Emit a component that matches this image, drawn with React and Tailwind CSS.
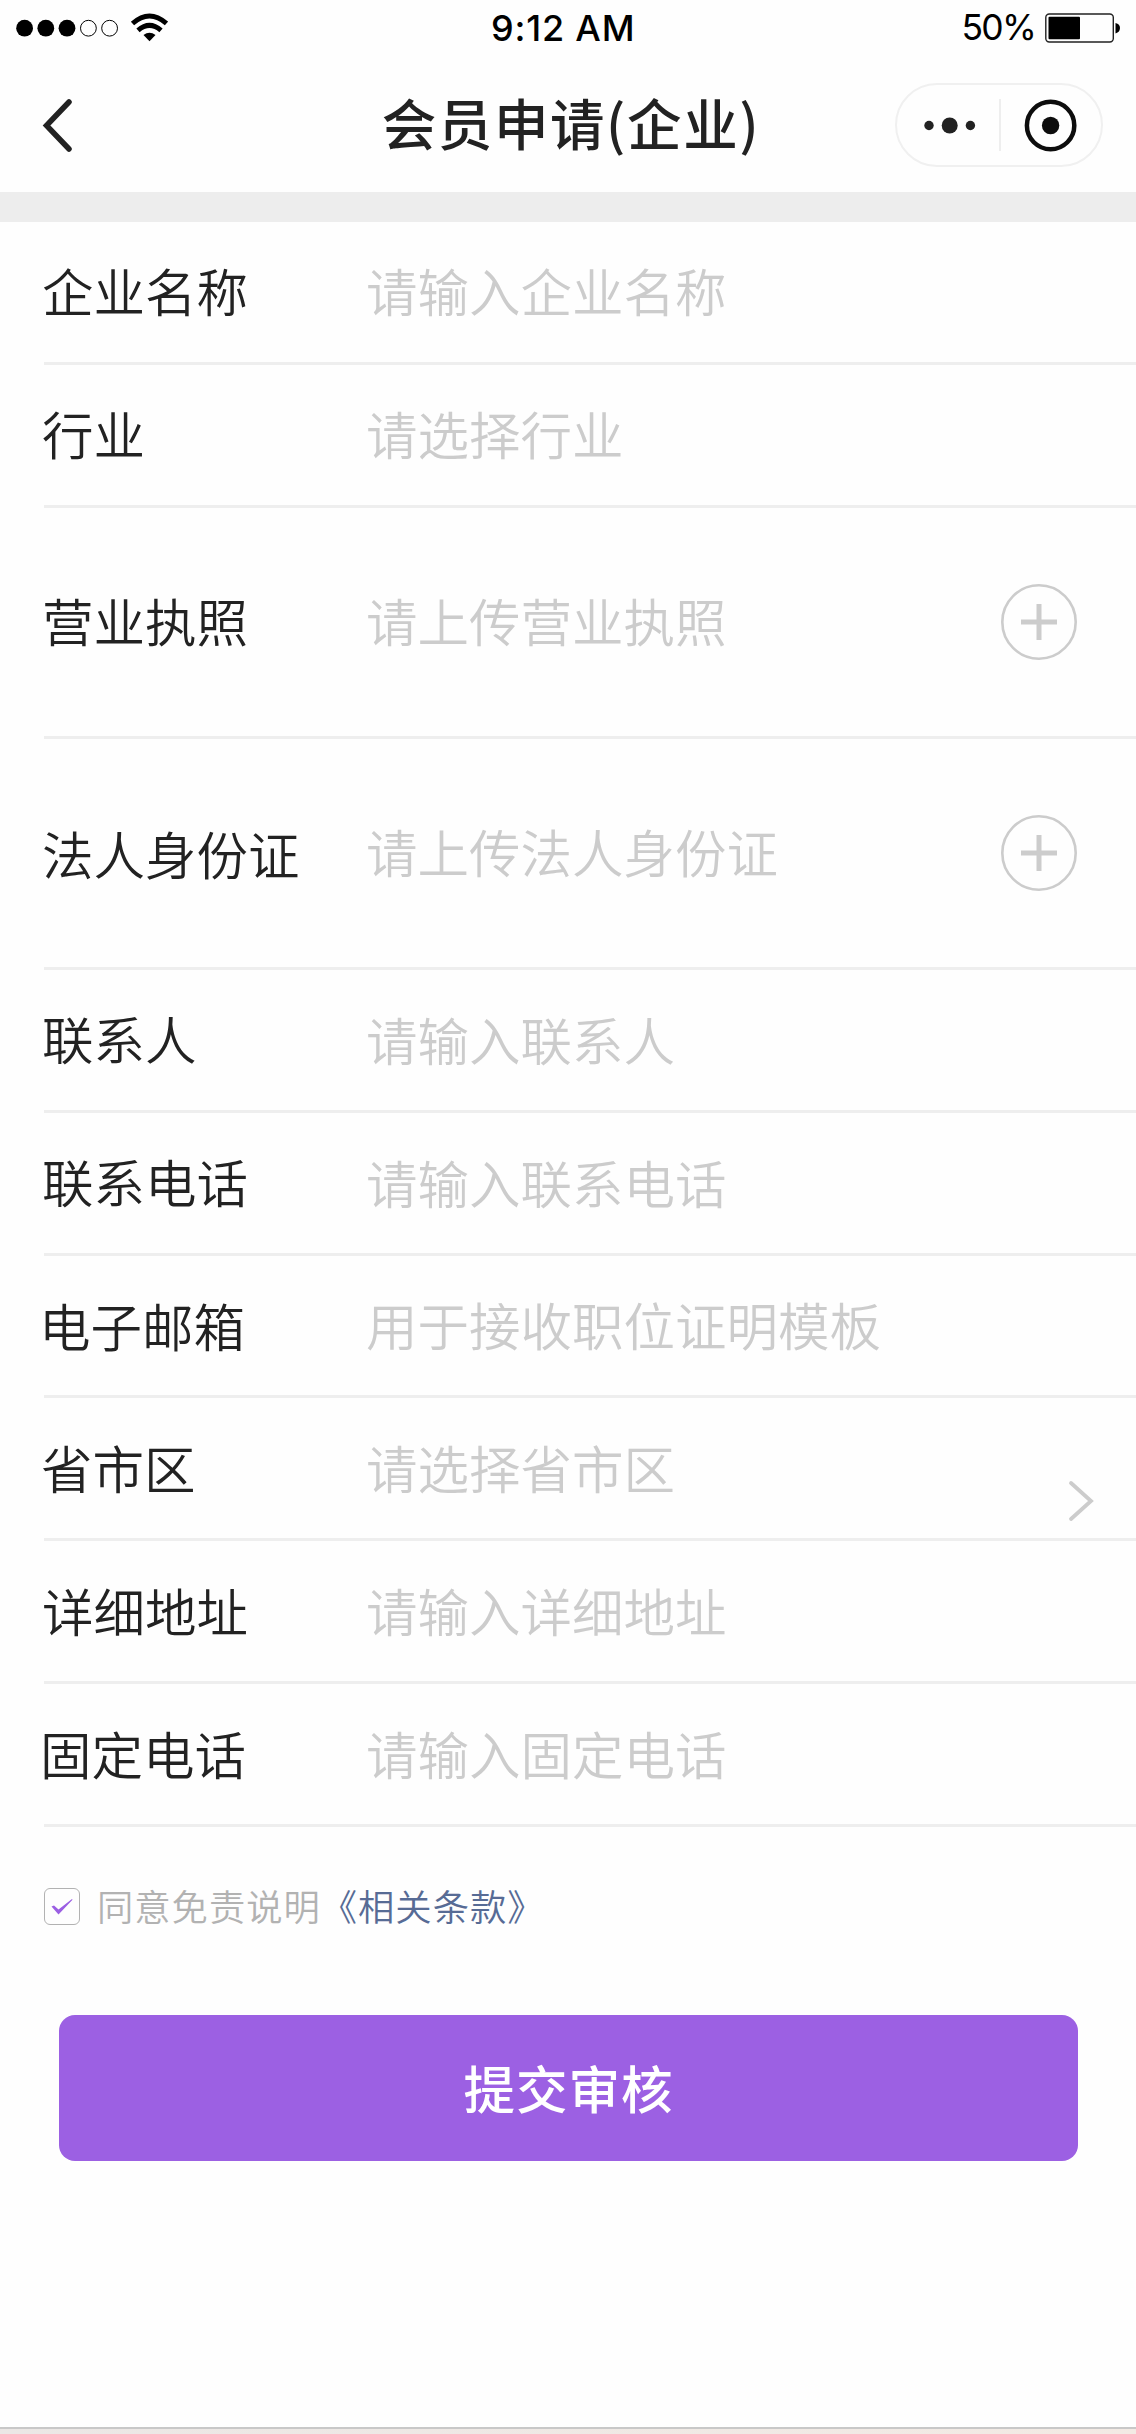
const fields = [
    { label: '企业名称', placeholder: '请输入企业名称' },
    { label: '行业', placeholder: '请选择行业' },
    { label: '营业执照', placeholder: '请上传营业执照', upload: true },
    { label: '法人身份证', placeholder: '请上传法人身份证', upload: true, nudge: 'pt-[3px]' },
    { label: '联系人', placeholder: '请输入联系人', hintNudge: 'pt-[2px]' },
    { label: '联系电话', placeholder: '请输入联系电话', hintNudge: 'pt-[2px]' },
    { label: '电子邮箱', placeholder: '用于接收职位证明模板', nudge: '-ml-[3px] pt-[3px]' },
    { label: '省市区', placeholder: '请选择省市区', arrow: true, nudge: '-ml-px' },
    { label: '详细地址', placeholder: '请输入详细地址' },
    { label: '固定电话', placeholder: '请输入固定电话', nudge: '-ml-[2px] pt-[2px]', hintNudge: 'pt-[2px]' },
];

const StatusBar = () => (
    <div className="flex h-14 items-center pl-4 pr-[15px] font-['Inter',sans-serif] leading-none text-black">
        <div className="w-[475px]">
            <svg width="152" height="30" viewBox="0 0 152 30">
                <circle cx="8.6" cy="15.2" r="8.4" />
                <circle cx="29.8" cy="15.2" r="8.4" />
                <circle cx="51" cy="15.2" r="8.4" />
                <circle cx="72.4" cy="15.2" r="7.9" fill="none" stroke="#000" />
                <circle cx="93.6" cy="15.2" r="7.9" fill="none" stroke="#000" />
                <path d="M116.500 10.500Q133.500 -4.500 150.500 10.500" fill="none" stroke="#000" strokeWidth="5" />
                <path d="M122 17.300Q133.500 7.500 145 17.300" fill="none" stroke="#000" strokeWidth="5" />
                <path d="M127.500 22Q133.500 17.500 139.500 22L133.500 28.300Z" />
            </svg>
        </div>
        <span className="whitespace-nowrap text-[36px] font-medium tracking-[0.8px]">9:12 AM</span>
        <div className="flex flex-1 items-center justify-end gap-[10px]">
            <span className="text-[35.5px] tracking-[-1.8px]">50%</span>
            <svg width="76" height="30" viewBox="0 0 76 30">
                <rect x="0.8" y="1" width="67.500" height="28" rx="3.500" fill="none" stroke="#222" strokeWidth="1.400" />
                <rect x="3.500" y="3.800" width="31.500" height="22.500" rx="1" />
                <path d="M70.500 10Q75 11 75 15T70.500 20.500Z" />
            </svg>
        </div>
    </div>
);

const NavBar = () => (
    <div className="flex h-[136px] items-center justify-between pl-[42px] pr-[33px] text-[#222]">
        <div className="w-[208px]">
            <svg width="32" height="56" viewBox="0 0 32 56" fill="none" stroke="#222" strokeWidth="5.500" strokeLinecap="round">
                <path d="M27 6L4.500 29.500L27 53" />
            </svg>
        </div>
        <h1 className="-ml-[3px] pb-[3px] text-[54.5px] font-medium leading-none tracking-[1.6px]">会员申请(企业)</h1>
        <div className="mt-[2px] flex h-[84px] w-[208px] items-center rounded-full border-[2.5px] border-[#f0f0f0]">
            <svg width="102" height="78" viewBox="0 0 102 78" fill="#222">
                <circle cx="32" cy="39.500" r="4.700" />
                <circle cx="52.700" cy="39.500" r="8" />
                <circle cx="73.400" cy="39.500" r="4.700" />
            </svg>
            <div className="h-[52px] w-[2px] bg-[#eeeeee]" />
            <svg width="100" height="78" viewBox="0 0 100 78">
                <circle cx="49.600" cy="39.500" r="23.700" fill="none" stroke="#0d0d0d" strokeWidth="4.500" />
                <circle cx="49.600" cy="39.500" r="8.700" fill="#0d0d0d" />
            </svg>
        </div>
    </div>
);

const FieldRow = ({ label, placeholder, upload, arrow, nudge = '', hintNudge = '' }) => (
    <div className={`flex items-center border-b-[3px] border-[#eeeeee] text-[51.5px] font-[350] leading-none ${upload ? 'h-[231px]' : 'h-[142.9px]'}`}>
        <div className="-ml-[2px] w-[324px] shrink-0 pb-[4px] text-[#222]">
            <div className={nudge}>{label}</div>
        </div>
        <div className="flex-1 whitespace-nowrap pb-[4px] text-[#ccc]">
            <div className={hintNudge}>{placeholder}</div>
        </div>
        {upload && (
            <svg className="mr-[58px]" width="78" height="78" viewBox="0 0 78 78" fill="none" stroke="#ccc">
                <circle cx="39" cy="39" r="36.700" strokeWidth="2.600" />
                <path d="M39 21V57M21 39H57" strokeWidth="5" />
            </svg>
        )}
        {arrow && (
            <svg className="mr-[42px] mt-[65px]" width="26" height="44" viewBox="0 0 26 44" fill="none" stroke="#ccc" strokeWidth="3.800" strokeLinecap="round">
                <path d="M3 4L23 22L3 40" />
            </svg>
        )}
    </div>
);

const App = () => {
    return (
        <div className="flex h-[2434px] w-[1136px] flex-col overflow-hidden bg-[#fefefe] font-['Noto_Sans_CJK_SC',sans-serif]">
            <StatusBar />
            <NavBar />
            <div className="h-[30px] shrink-0 bg-[#ededed]" />

            <div className="pl-[44px]">
                {fields.map((f) => (
                    <FieldRow key={f.label} {...f} />
                ))}
            </div>

            {/* Agreement */}
            <div className="mt-[60px] flex h-[38px] items-center pl-[44px]">
                <div className="flex h-[37px] w-[36px] items-center justify-center rounded-[6px] border-[1.5px] border-[#b2b2b2]">
                    <svg width="22" height="17" viewBox="0 0 22 17" fill="#9b5fe3">
                        <path d="M0.500 8.500L3 7.500L7.500 11.500L21 1L21.500 1.800L7.500 16.500Z" />
                    </svg>
                </div>
                <div className="ml-[17px] whitespace-nowrap pb-[2px] text-[36.3px] font-[350] leading-none tracking-[1px] text-[#b2b2b2]">
                    同意免责说明<span className="text-[#576b95]">《相关条款》</span>
                </div>
            </div>

            <button className="ml-[59px] mt-[90px] h-[146px] w-[1019px] shrink-0 rounded-[16px] bg-[#9c60e3] pb-[3px] text-[51.5px] font-medium leading-none tracking-[1px] text-white">
                提交审核
            </button>

            <div className="mt-auto h-[7px] border-t-2 border-[#c8c8c8] bg-gradient-to-r from-[#ebe7e5] to-[#f3eae4]" />
        </div>
    );
};

export default App;
